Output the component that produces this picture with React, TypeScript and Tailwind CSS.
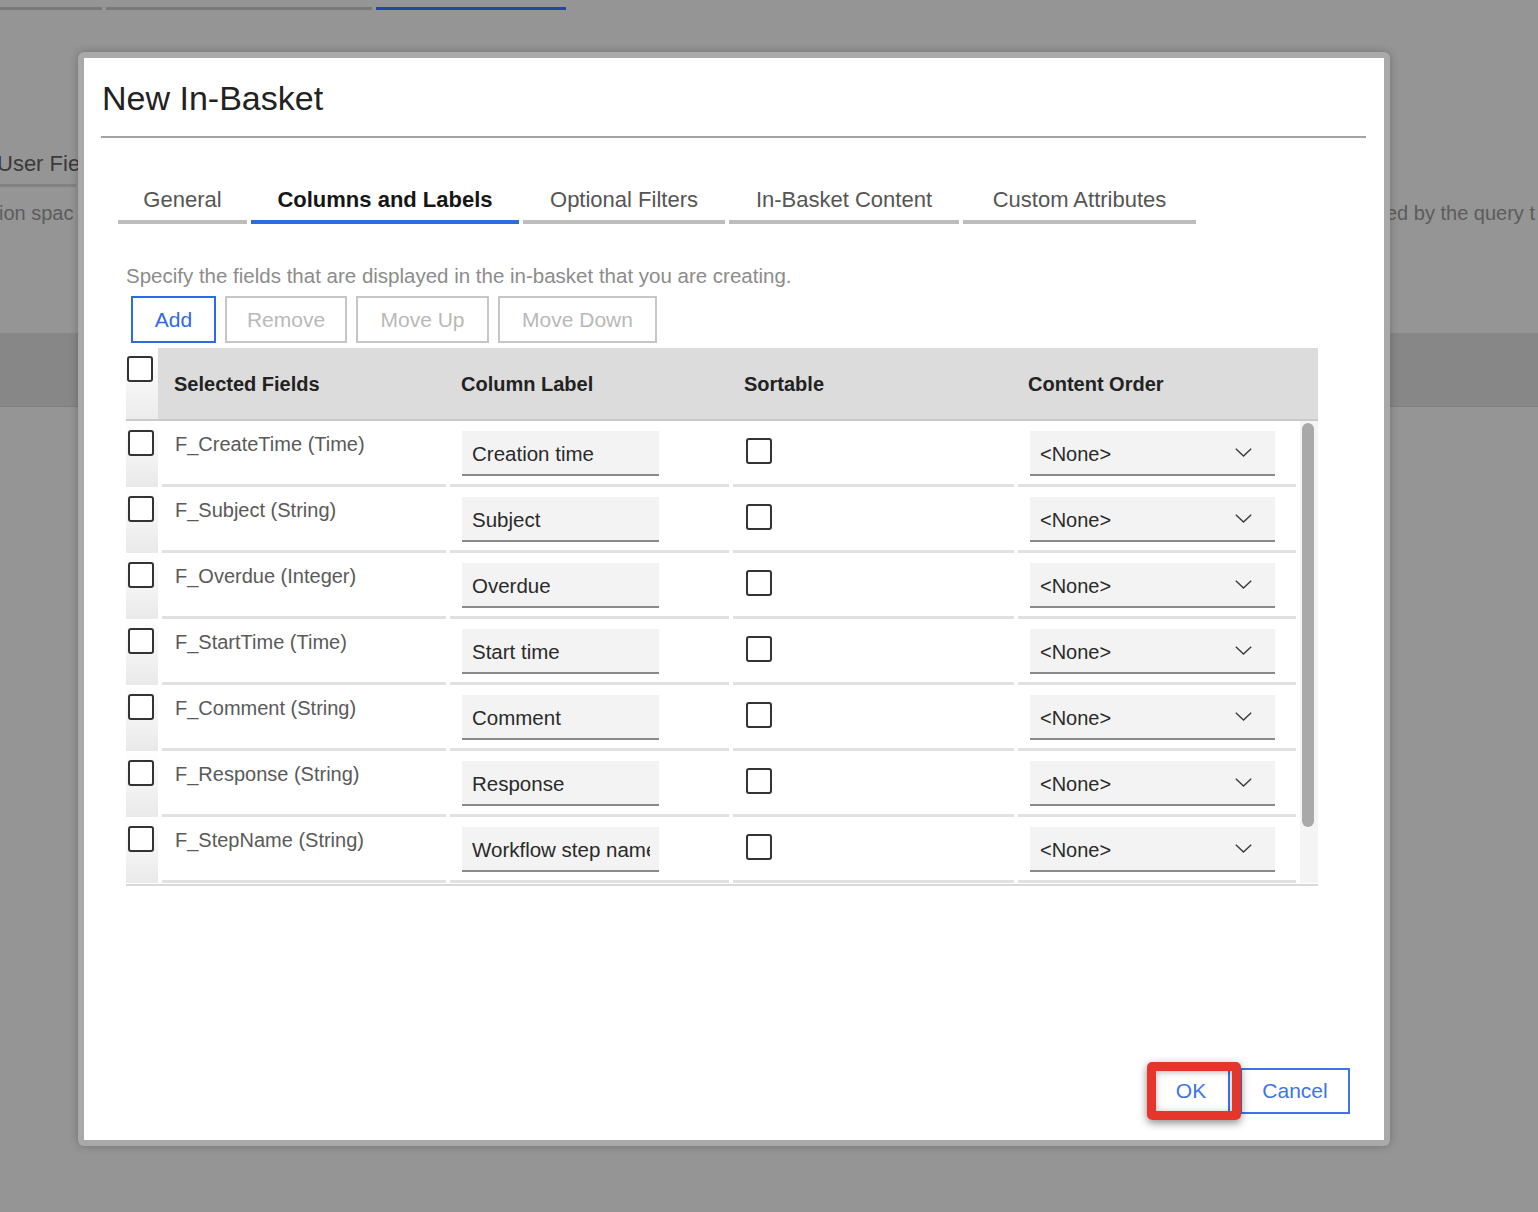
import React from "react";

const rows: [string, string][] = [
  ["F_CreateTime (Time)", "Creation time"],
  ["F_Subject (String)", "Subject"],
  ["F_Overdue (Integer)", "Overdue"],
  ["F_StartTime (Time)", "Start time"],
  ["F_Comment (String)", "Comment"],
  ["F_Response (String)", "Response"],
  ["F_StepName (String)", "Workflow step name"],
];

const tabs: { label: string; w: string; active?: boolean }[] = [
  { label: "General", w: "w-[129px]" },
  { label: "Columns and Labels", w: "w-[268px]", active: true },
  { label: "Optional Filters", w: "w-[202px]" },
  { label: "In-Basket Content", w: "w-[230px]" },
  { label: "Custom Attributes", w: "w-[233px]" },
];

function Box() {
  return <div className="w-[26px] h-[26px] border-2 border-[#333] rounded-[3px] bg-white" />;
}

function Chevron() {
  return (
    <svg width="17" height="9" viewBox="0 0 17 9" fill="none" className="mb-[4px]">
      <polyline points="0.8,0.8 8.5,8 16.2,0.8" stroke="#3a3a3a" strokeWidth="1.4" />
    </svg>
  );
}

export default function App() {
  return (
    <div className="relative w-[1538px] h-[1212px] overflow-hidden bg-[#959595] font-['Liberation_Sans',Arial,sans-serif]">
      {/* background page (dimmed) */}
      <div className="flex gap-[4px] pt-[7px]">
        <div className="h-[3px] w-[102px] bg-[#7a7a7a]" />
        <div className="h-[3px] w-[266px] bg-[#7a7a7a]" />
        <div className="h-[3px] w-[190px] bg-[#2546a0]" />
      </div>
      <div className="mt-[141px] ml-[-3px] text-[22px] leading-[26px] text-[#3a3a3a] whitespace-nowrap">User Fie</div>
      <div className="mt-[7px] h-[3px] w-[76px] bg-[#828282]" />
      <div className="mt-[14px] flex text-[20px] leading-[24px] text-[#5c5c5c] whitespace-nowrap">
        <div className="w-[1387px] shrink-0 ml-[-1px]">ion spac</div>
        <div className="shrink-0">ed by the query t</div>
      </div>
      <div className="mt-[108px] h-[74px] bg-[#878787] border-b border-[#7f7f7f]" />

      {/* modal */}
      <div className="absolute left-[78px] top-[52px] w-[1312px] h-[1094px] rounded-[6px] bg-[#a9a9a9] p-[6px] shadow-[0_0_8px_rgba(0,0,0,0.25)]">
        <div className="h-full bg-white flex flex-col">
          <div className="pt-[20px] pl-[18px] text-[34px] leading-[40px] text-[#222]">New In-Basket</div>
          <div className="mt-[18px] ml-[17px] mr-[18px] h-[2px] bg-[#a3a3a3]" />

          <div className="mt-[50px] ml-[34px] flex gap-[4px]">
            {tabs.map((t) => (
              <div
                key={t.label}
                className={
                  t.w +
                  " pb-[8px] text-center text-[22px] leading-[24px] whitespace-nowrap border-b-4 " +
                  (t.active ? "border-[#2f6ae6] font-bold text-[#161616]" : "border-[#bdbdbd] text-[#555]")
                }
              >
                {t.label}
              </div>
            ))}
          </div>

          <div className="mt-[40px] ml-[42px] text-[20.5px] leading-[24px] text-[#8c8c8c]">
            Specify the fields that are displayed in the in-basket that you are creating.
          </div>

          <div className="mt-[8px] ml-[47px] flex gap-[9px] text-[21px]">
            <div className="w-[85px] h-[47px] border-2 border-[#2f6ae6] text-[#2f6ae6] flex items-center justify-center">Add</div>
            <div className="w-[122px] h-[47px] border-2 border-[#c6c6c6] text-[#b9b9b9] flex items-center justify-center">Remove</div>
            <div className="w-[133px] h-[47px] border-2 border-[#c6c6c6] text-[#b9b9b9] flex items-center justify-center">Move Up</div>
            <div className="w-[159px] h-[47px] border-2 border-[#c6c6c6] text-[#b9b9b9] flex items-center justify-center">Move Down</div>
          </div>

          {/* table */}
          <div className="mt-[5px] ml-[42px] w-[1192px]">
            <div className="flex h-[71px]">
              <div className="w-[32px] pt-[8px] pl-[1px] bg-linear-to-b from-white to-[#ececec]">
                <Box />
              </div>
              <div className="flex-1 flex items-center bg-[#dcdcdc] text-[20px] font-bold text-[#222]">
                <div className="w-[290px] pl-[16px]">Selected Fields</div>
                <div className="w-[283px] pl-[13px]">Column Label</div>
                <div className="w-[285px] pl-[13px]">Sortable</div>
                <div className="flex-1 pl-[12px]">Content Order</div>
              </div>
            </div>
            <div className="h-[2px] bg-[#c9c9c9]" />
            <div className="flex">
              <div className="w-[1174px]">
                {rows.map(([f, l]) => (
                  <div key={f} className="flex h-[66px]">
                    <div className="w-[32px] pl-[2px] pt-[9px] bg-linear-to-b from-white to-[#e9e9e9]">
                      <Box />
                    </div>
                    <div className="w-[290px]">
                      <div className="h-full ml-[4px] mr-[2px] border-b-[3px] border-[#e1e1e1] pt-[11px] pl-[13px] text-[20px] leading-[24px] text-[#5a5a5a] whitespace-nowrap">
                        {f}
                      </div>
                    </div>
                    <div className="w-[283px]">
                      <div className="h-full mx-[2px] border-b-[3px] border-[#e1e1e1] pt-[10px] pl-[12px]">
                        <div className="w-[197px] h-[45px] bg-[#f3f3f3] border-b-2 border-[#8a8a8a] pl-[10px] pr-[9px] pt-[3px] flex items-center text-[20.5px] text-[#2a2a2a]">
                          <span className="block min-w-0 flex-1 overflow-hidden whitespace-nowrap">{l}</span>
                        </div>
                      </div>
                    </div>
                    <div className="w-[285px]">
                      <div className="h-full mx-[2px] border-b-[3px] border-[#e1e1e1] pt-[17px] pl-[13px]">
                        <Box />
                      </div>
                    </div>
                    <div className="w-[284px]">
                      <div className="h-full ml-[2px] mr-[4px] border-b-[3px] border-[#e1e1e1] pt-[10px] pl-[12px]">
                        <div className="w-[245px] h-[45px] bg-[#f3f3f3] border-b-2 border-[#8a8a8a] pl-[10px] pr-[23px] pt-[3px] flex items-center justify-between text-[20px] text-[#2a2a2a]">
                          <span>&lt;None&gt;</span>
                          <Chevron />
                        </div>
                      </div>
                    </div>
                  </div>
                ))}
              </div>
              <div className="w-[18px] h-[462px] bg-[#f4f4f4]">
                <div className="ml-[2px] mt-[2px] w-[12px] h-[404px] rounded-full bg-[#a9a9a9]" />
              </div>
            </div>
            <div className="mt-[1px] h-[2px] bg-[#d9d9d9]" />
          </div>

          {/* footer */}
          <div className="mt-auto mb-[26px] pr-[34px] flex justify-end gap-[10px] text-[21px]">
            <div className="relative">
              <div className="w-[78px] h-[46px] border-2 border-[#3d74e6] text-[#3d74e6] flex items-center justify-center bg-white">OK</div>
              <div className="absolute left-[-5px] top-[-6px] w-[94px] h-[58px] border-[9px] border-[#e6352a] rounded-[5px] shadow-[0_3px_8px_rgba(0,0,0,0.45),inset_0_1px_6px_rgba(0,0,0,0.3)]" />
            </div>
            <div className="w-[110px] h-[46px] border-2 border-[#3d74e6] text-[#3d74e6] flex items-center justify-center bg-white">Cancel</div>
          </div>
        </div>
      </div>
    </div>
  );
}
